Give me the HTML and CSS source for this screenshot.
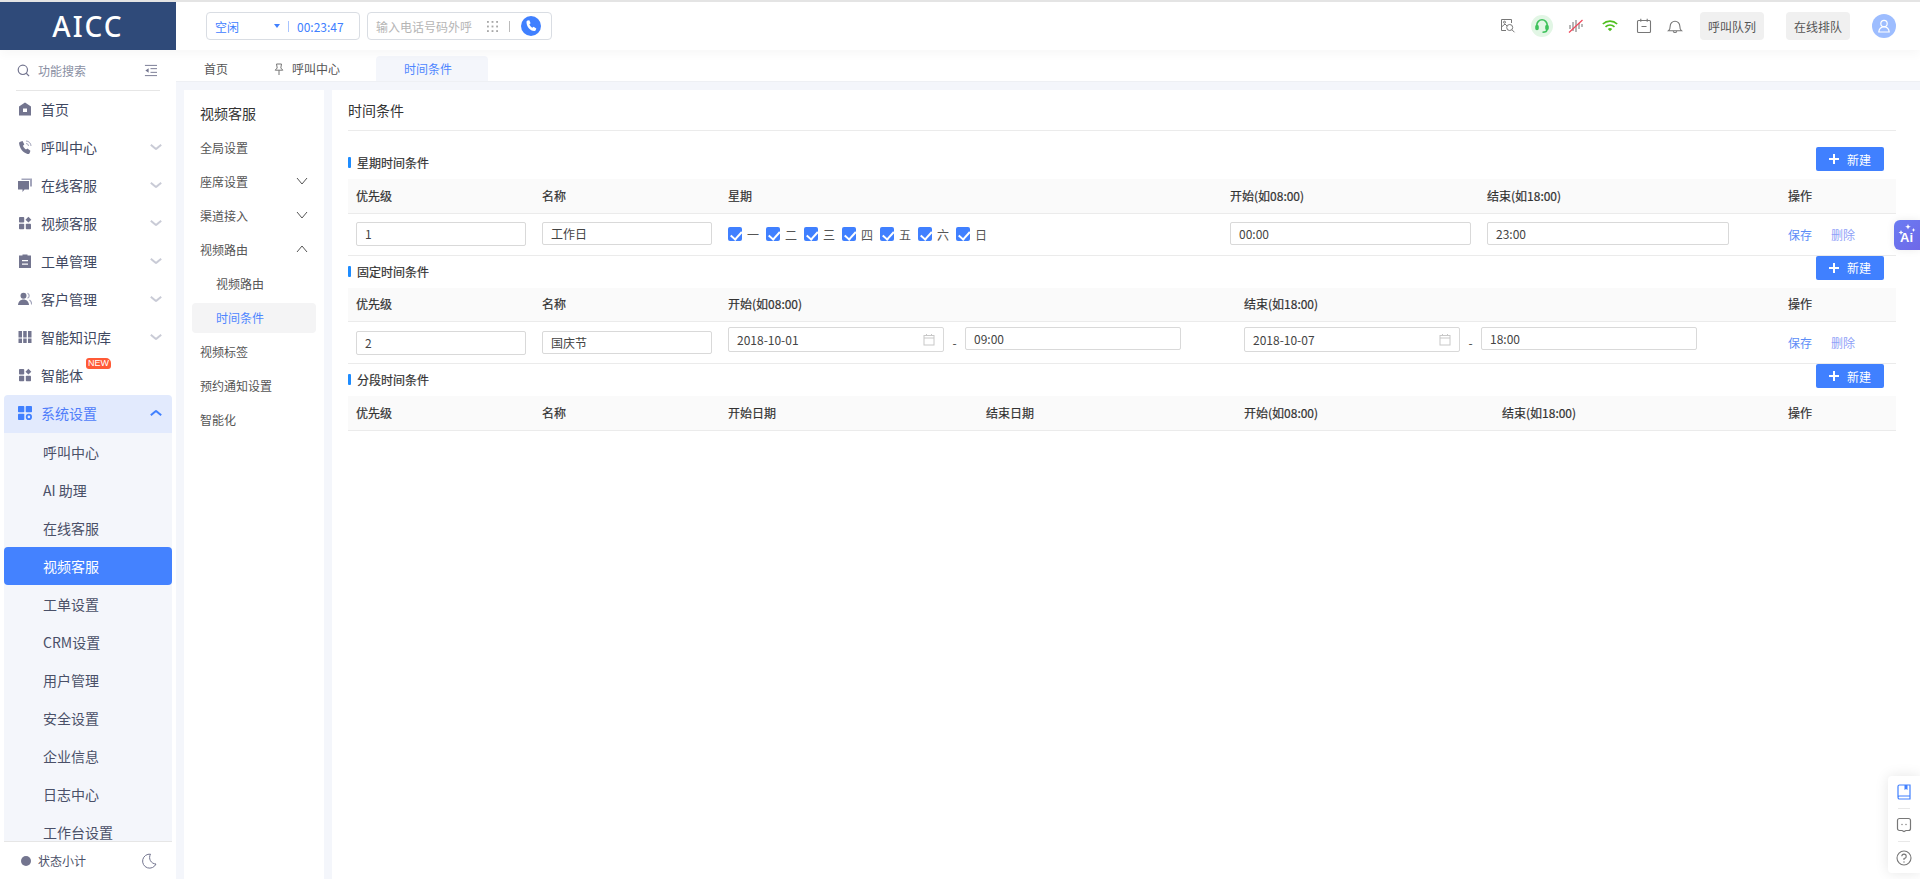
FILE: index.html
```html
<!DOCTYPE html>
<html lang="zh-CN">
<head>
<meta charset="utf-8">
<title>AICC</title>
<link rel="stylesheet" href="styles.css">
</head>
<body>
<header class="topbar">
  <div class="logo">AICC</div>
  <div class="status-box">
    <span class="status-name">空闲</span>
    <span class="caret"></span>
    <span class="vsep vsep-blue"></span>
    <span class="status-time">00:23:47</span>
  </div>
  <div class="dial-box">
    <span class="dial-hint">输入电话号码外呼</span>
    <svg class="dial-pad" viewBox="0 0 12 12"><g fill="#a8a8a8"><rect x="0" y="0" width="2" height="2"/><rect x="5" y="0" width="2" height="2"/><rect x="10" y="0" width="2" height="2"/><rect x="0" y="5" width="2" height="2"/><rect x="5" y="5" width="2" height="2"/><rect x="10" y="5" width="2" height="2"/><rect x="0" y="10" width="2" height="2"/><rect x="5" y="10" width="2" height="2"/><rect x="10" y="10" width="2" height="2"/></g></svg>
    <span class="vsep"></span>
    <span class="dial-btn"><svg viewBox="0 0 20 20"><path fill="#fff" d="M6.600 4.600 8.300 4.200l1.300 3-1.200 1.100c.5 1.400 1.500 2.600 2.900 3.400l1.300-1 2.700 1.700-.5 1.700c-.2.600-.9 1-1.600.9C8.900 14.500 5.700 11 5.500 6.200c0-.7.500-1.400 1.100-1.600Z"/></svg></span>
  </div>
  <div class="tools">
    <svg class="tool tool-first" viewBox="0 0 16 16" fill="none" stroke="#777" stroke-width="1"><path d="M6 12.500H1.500v-11h10V5"/><path d="M1.500 9 5 6l2 2"/><circle cx="4.500" cy="4.200" r="1"/><circle cx="9.700" cy="9.500" r="3"/><path d="m12 11.800 2.500 2.500"/></svg>
    <span class="tool-round"><svg viewBox="0 0 16 16" fill="none" stroke="#3fc25c" stroke-width="1.600"><path d="M2.800 9V7a5.200 5.200 0 0 1 10.400 0v2"/><rect x="2" y="7.500" width="2" height="4" rx="1" fill="#3fc25c"/><rect x="12" y="7.500" width="2" height="4" rx="1" fill="#3fc25c"/><path d="M13 11.500c0 2-2 2.700-4.500 2.700"/></svg></span>
    <svg class="tool" viewBox="0 0 16 16" fill="none" stroke="#888" stroke-width="1.200"><path d="M2 7v4M5 4v9M8 2v12M11 5v6M14 6v3"/><path d="M1 14.500 14.500 2" stroke="#f0475a"/></svg>
    <svg class="tool" viewBox="0 0 16 16" fill="none" stroke="#4fbf1f" stroke-width="1.600"><path d="M.8 6a10.500 10.500 0 0 1 14.400 0"/><path d="M3.500 8.800a6.500 6.500 0 0 1 9 0"/><path d="M8 13.200 5.800 11a3.200 3.200 0 0 1 4.400 0Z" fill="#4fbf1f" stroke="none"/></svg>
    <svg class="tool tool-cal" viewBox="0 0 16 16" fill="none" stroke="#777" stroke-width="1.100"><rect x="1.500" y="2.500" width="13" height="12" rx="1"/><path d="M4.800 .8v3M11.200 .8v3M5.500 8.500h5"/></svg>
    <svg class="tool tool-bell" viewBox="0 0 16 16" fill="none" stroke="#777" stroke-width="1.100"><path d="M1.500 12.800h13c-1.300-1-1.700-2-1.700-4.800a4.800 4.800 0 0 0-9.600 0c0 2.800-.4 3.800-1.700 4.800Z"/><path d="M6.200 13.200a1.900 1.900 0 0 0 3.600 0"/></svg>
  </div>
  <button class="queue-btn">呼叫队列</button>
  <button class="queue-btn queue-btn-second">在线排队</button>
  <span class="avatar"><svg viewBox="0 0 24 24" fill="none" stroke="#fff" stroke-width="1.200"><circle cx="12" cy="9.500" r="3.200"/><path d="M6.800 18c.3-3.300 2.300-5.200 5.200-5.200s4.900 1.900 5.200 5.200Z"/></svg></span>
</header>

<div class="workspace">
  <aside class="sidebar">
    <div class="side-search">
      <svg class="side-search-icon" viewBox="0 0 14 14" fill="none" stroke="#73758f" stroke-width="1.300"><circle cx="6.300" cy="6.300" r="5"/><path d="m10 10 3 3"/></svg>
      <span class="side-search-text">功能搜索</span>
      <svg class="side-collapse" viewBox="0 0 14 14" fill="none" stroke="#73758f" stroke-width="1"><path d="M1 1.500h13M7 5h7M7 9h7M1 12.500h13"/><path d="M5 4.500v5L1.500 7Z" fill="#73758f" stroke="none"/></svg>
    </div>
    <nav class="menu">
      <a class="menu-item"><svg class="mi" viewBox="0 0 14 14"><path fill="#73758f" fill-rule="evenodd" d="M7 .5 13 4.500V13.500H1V4.500ZM5 6.500V10H9V6.500Z"/></svg><span class="mt">首页</span></a>
      <a class="menu-item"><svg class="mi" viewBox="0 0 14 14"><path fill="#73758f" d="M2.300 1.800 4.600 1l1.700 3.600-1.300 1.200c.5 1.600 1.500 2.800 3 3.700l1.400-1 3 2.300-.7 2.300c-.3.800-1.100 1.200-1.900 1C5.300 12.800 1.700 8.700 1.100 3.500c-.1-.8.400-1.400 1.200-1.700Z"/><path fill="none" stroke="#a3a5bb" stroke-width="1" d="M8 1a5 5 0 0 1 5 5M8 3.500a2.500 2.500 0 0 1 2.500 2.500"/></svg><span class="mt">呼叫中心</span><span class="chev"></span></a>
      <a class="menu-item"><svg class="mi" viewBox="0 0 14 14"><path fill="#73758f" d="M0 3h11v8.500H6.500L4.500 14V11.500H0Z"/><path fill="#a3a5bb" d="M3.500 .5H14v8h-2V2H3.500Z"/></svg><span class="mt">在线客服</span><span class="chev"></span></a>
      <a class="menu-item"><svg class="mi" viewBox="0 0 14 14"><g fill="#73758f"><rect x="1" y="1" width="5.200" height="5.500" rx=".8"/><rect x="1" y="7.800" width="5.200" height="5.500" rx=".8"/><rect x="7.800" y="7.800" width="5.200" height="5.500" rx=".8"/><path d="m10.400.8 2.900 2.900-2.900 2.900-2.900-2.900Z"/></g></svg><span class="mt">视频客服</span><span class="chev"></span></a>
      <a class="menu-item"><svg class="mi" viewBox="0 0 14 14"><path fill="#73758f" fill-rule="evenodd" d="M4.500 1.500V.5h5v1H13v12.500H1V1.500ZM4 6v1.200h6V6ZM4 9.500v1.200h6V9.500Z"/></svg><span class="mt">工单管理</span><span class="chev"></span></a>
      <a class="menu-item"><svg class="mi" viewBox="0 0 14 14"><circle cx="5.500" cy="3.700" r="3" fill="#73758f"/><path fill="#73758f" d="M0 13c.2-3.300 2.500-5.500 5.500-5.500S10.800 9.700 11 13Z"/><path fill="none" stroke="#a3a5bb" stroke-width="1.200" d="M9.500 1.200a2.700 2.700 0 0 1 0 5M11.500 8c1.300.8 2.100 2.500 2.200 4.500"/></svg><span class="mt">客户管理</span><span class="chev"></span></a>
      <a class="menu-item"><svg class="mi" viewBox="0 0 14 14"><g fill="#73758f"><rect x="0.500" y="1" width="3.500" height="12"/><rect x="5.200" y="1" width="3.500" height="12"/><rect x="10" y="1" width="3.500" height="12"/></g><path stroke="#fff" stroke-width="1" d="M0 8h14"/></svg><span class="mt">智能知识库</span><span class="chev"></span></a>
      <a class="menu-item"><svg class="mi" viewBox="0 0 14 14"><g fill="#73758f"><rect x="1" y="1" width="5.200" height="5.500" rx=".8"/><rect x="1" y="7.800" width="5.200" height="5.500" rx=".8"/><rect x="7.800" y="7.800" width="5.200" height="5.500" rx=".8"/><path d="m10.400.8 2.900 2.900-2.900 2.900-2.900-2.900Z"/></g></svg><span class="mt">智能体</span><span class="badge-new">NEW</span></a>
      <a class="menu-item menu-item-open"><svg class="mi" viewBox="0 0 14 14"><g fill="#4080ff"><rect x="0" y="0" width="6.300" height="6.300" rx=".8"/><rect x="7.700" y="0" width="6.300" height="6.300" rx=".8"/><rect x="0" y="7.700" width="6.300" height="6.300" rx=".8"/></g><circle cx="10.900" cy="10.900" r="2.200" fill="none" stroke="#4080ff" stroke-width="1.800"/></svg><span class="mt">系统设置</span><span class="chev chev-up"></span></a>
      <div class="submenu">
        <a class="sub-item">呼叫中心</a>
        <a class="sub-item">AI 助理</a>
        <a class="sub-item">在线客服</a>
        <a class="sub-item sub-item-active">视频客服</a>
        <a class="sub-item">工单设置</a>
        <a class="sub-item">CRM设置</a>
        <a class="sub-item">用户管理</a>
        <a class="sub-item">安全设置</a>
        <a class="sub-item">企业信息</a>
        <a class="sub-item">日志中心</a>
        <a class="sub-item">工作台设置</a>
      </div>
    </nav>
    <div class="side-foot">
      <span class="foot-dot"></span>
      <span class="foot-text">状态小计</span>
      <svg class="foot-moon" viewBox="0 0 16 16" fill="none" stroke="#73758f" stroke-width="1"><path d="M9.500 1.200A7 7 0 1 0 15 11 6.500 6.500 0 0 1 9.500 1.200Z"/></svg>
    </div>
  </aside>

  <div class="content">
    <div class="tabs">
      <a class="tab tab-home">首页</a>
      <a class="tab tab-pin"><svg class="pin" viewBox="0 0 12 12" fill="none" stroke="#777" stroke-width="1"><path d="M3.500 1h5L7.800 5l2 2.200H2.200L4.200 5ZM6 7.200V12"/></svg>呼叫中心</a>
      <a class="tab tab-active">时间条件</a>
    </div>
    <div class="panels">
      <div class="subnav">
        <div class="subnav-title">视频客服</div>
        <a class="sn-item">全局设置</a>
        <a class="sn-item">座席设置<svg class="sn-chev" viewBox="0 0 12 8" fill="none" stroke="#555" stroke-width="1"><path d="m1 1 5 6 5-6"/></svg></a>
        <a class="sn-item">渠道接入<svg class="sn-chev" viewBox="0 0 12 8" fill="none" stroke="#555" stroke-width="1"><path d="m1 1 5 6 5-6"/></svg></a>
        <a class="sn-item">视频路由<svg class="sn-chev" viewBox="0 0 12 8" fill="none" stroke="#555" stroke-width="1"><path d="m1 7 5-6 5 6"/></svg></a>
        <a class="sn-item sn-sub">视频路由</a>
        <a class="sn-item sn-sub sn-active">时间条件</a>
        <a class="sn-item">视频标签</a>
        <a class="sn-item">预约通知设置</a>
        <a class="sn-item">智能化</a>
      </div>
      <main class="page">
        <h1 class="page-title">时间条件</h1>

        <section class="block block-first">
          <div class="block-head">
            <h2 class="block-title">星期时间条件</h2>
            <button class="add-btn"><span class="plus"></span>新建</button>
          </div>
          <table class="grid">
            <colgroup><col class="c186"><col class="c186"><col class="c502"><col class="c257"><col class="c301"><col></colgroup>
            <thead><tr><th>优先级</th><th>名称</th><th>星期</th><th>开始(如08:00)</th><th>结束(如18:00)</th><th>操作</th></tr></thead>
            <tbody><tr>
              <td><div class="field field-full field-tall">1</div></td>
              <td><div class="field field-full">工作日</div></td>
              <td><div class="weekdays">
                <label class="wd"><span class="cb"></span>一</label>
                <label class="wd"><span class="cb"></span>二</label>
                <label class="wd"><span class="cb"></span>三</label>
                <label class="wd"><span class="cb"></span>四</label>
                <label class="wd"><span class="cb"></span>五</label>
                <label class="wd"><span class="cb"></span>六</label>
                <label class="wd"><span class="cb"></span>日</label>
              </div></td>
              <td><div class="field w241">00:00</div></td>
              <td><div class="field w242">23:00</div></td>
              <td class="ops"><a class="op-save">保存</a><a class="op-del">删除</a></td>
            </tr></tbody>
          </table>
        </section>

        <section class="block">
          <div class="block-head">
            <h2 class="block-title">固定时间条件</h2>
            <button class="add-btn"><span class="plus"></span>新建</button>
          </div>
          <table class="grid">
            <colgroup><col class="c186"><col class="c186"><col class="c516"><col class="c544"><col></colgroup>
            <thead><tr><th>优先级</th><th>名称</th><th>开始(如08:00)</th><th>结束(如18:00)</th><th>操作</th></tr></thead>
            <tbody><tr>
              <td><div class="field field-full field-tall">2</div></td>
              <td><div class="field field-full">国庆节</div></td>
              <td><div class="range">
                <div class="field field-date">2018-10-01<svg class="cal" viewBox="0 0 12 12" fill="none" stroke="#c8c8c8" stroke-width="1"><rect x="1" y="2" width="10" height="9.500"/><path d="M1 4.500h10M3.500 .5v2M8.500 .5v2"/></svg></div>
                <span class="dash">-</span>
                <div class="field field-time">09:00</div>
              </div></td>
              <td><div class="range">
                <div class="field field-date">2018-10-07<svg class="cal" viewBox="0 0 12 12" fill="none" stroke="#c8c8c8" stroke-width="1"><rect x="1" y="2" width="10" height="9.500"/><path d="M1 4.500h10M3.500 .5v2M8.500 .5v2"/></svg></div>
                <span class="dash">-</span>
                <div class="field field-time">18:00</div>
              </div></td>
              <td class="ops"><a class="op-save">保存</a><a class="op-del">删除</a></td>
            </tr></tbody>
          </table>
        </section>

        <section class="block">
          <div class="block-head">
            <h2 class="block-title">分段时间条件</h2>
            <button class="add-btn"><span class="plus"></span>新建</button>
          </div>
          <table class="grid">
            <colgroup><col class="c186"><col class="c186"><col class="c258"><col class="c258"><col class="c258"><col class="c286"><col></colgroup>
            <thead><tr><th>优先级</th><th>名称</th><th>开始日期</th><th>结束日期</th><th>开始(如08:00)</th><th>结束(如18:00)</th><th>操作</th></tr></thead>
          </table>
        </section>
      </main>
    </div>
  </div>
</div>

<div class="ai-tab"><svg class="ai-stars" viewBox="0 0 26 30"><g fill="#fff"><path d="m14 4 .8 2 2 .8-2 .8-.8 2-.8-2-2-.8 2-.8Z"/><path d="m7 10 .7 1.800 1.800.7-1.800.7-.7 1.800-.7-1.800-1.800-.7 1.800-.7Z"/><path d="m19.500 8 .6 1.400 1.400.6-1.400.6-.6 1.400-.6-1.400-1.400-.6 1.400-.6Z"/></g></svg><span class="ai-word">Ai</span></div>
<div class="float-tools">
  <svg class="ft" viewBox="0 0 16 16" fill="none" stroke="#4080ff" stroke-width="1.200"><path d="M2 13V2.500C2 1.700 2.700 1 3.500 1H14v14H3.500C2.700 15 2 14.300 2 13.500s.7-1.500 1.500-1.500H14"/><path d="M8.500 1h3v5l-1.500-1-1.500 1Z" fill="#4080ff" stroke="none"/></svg>
  <span class="ft-line"></span>
  <svg class="ft" viewBox="0 0 16 16" fill="none" stroke="#777" stroke-width="1.200"><path d="M3.500 1.500h9c1.200 0 2 .8 2 2v8c0 1.200-.8 2-2 2H10l-2 1-2-1H3.500c-1.200 0-2-.8-2-2v-8c0-1.200.8-2 2-2Z"/><circle cx="6" cy="7.500" r=".7" fill="#777" stroke="none"/><circle cx="10" cy="7.500" r=".7" fill="#777" stroke="none"/></svg>
  <span class="ft-line"></span>
  <svg class="ft" viewBox="0 0 16 16" fill="none" stroke="#777" stroke-width="1.100"><circle cx="8" cy="8" r="7"/><path d="M5.800 6.200A2.200 2.200 0 1 1 8 8.500v1.500"/><circle cx="8" cy="12" r=".7" fill="#777" stroke="none"/></svg>
</div>
</body>
</html>
```
FILE: styles.css
```css
* { box-sizing: border-box; }
html, body { margin: 0; height: 100%; overflow: hidden; }
body {
  display: flex;
  flex-direction: column;
  font-family: "Noto Sans CJK SC", "Noto Sans", sans-serif;
  font-size: 12px;
  color: #333;
  background: #fff;
}
a { display: block; color: inherit; text-decoration: none; }
h1, h2 { margin: 0; font-weight: 400; }

/* top bar */
.topbar {
  flex: none;
  height: 50px;
  border-top: 2px solid #e4e4e4;
  display: flex;
  align-items: center;
  background: #fff;
  position: relative;
  z-index: 2;
  box-shadow: 0 4px 10px rgba(0, 0, 0, .035);
}
.logo {
  width: 176px;
  height: 48px;
  flex: none;
  background: #2f4a79;
  color: #fff;
  font-family: "Noto Sans", sans-serif;
  font-size: 28px;
  font-weight: 500;
  letter-spacing: 2px;
  line-height: 48px;
  text-align: center;
}
.status-box, .dial-box {
  height: 28px;
  display: flex;
  align-items: center;
  border: 1px solid #d9dde3;
  border-radius: 4px;
}
.status-box { width: 154px; margin-left: 30px; padding-left: 8px; color: #4080ff; }
.status-name { width: 51px; }
.caret { width: 0; height: 0; border: 3.500px solid transparent; border-top: 4px solid #4080ff; border-bottom: 0; margin-left: 8px; }
.vsep { width: 1px; height: 11px; background: #bbb; }
.vsep-blue { background: #a8c4ff; margin-left: 8px; }
.status-time { margin-left: 8px; }
.dial-box { width: 185px; margin-left: 7px; padding-left: 8px; }
.dial-hint { color: #b5b5b5; width: 96px; flex: none; }
.dial-pad { width: 11px; height: 11px; margin-left: 15px; }
.dial-box .vsep { margin-left: 11px; }
.dial-btn { width: 20px; height: 20px; border-radius: 50%; background: #4080ff; margin-left: 11px; display: flex; }
.dial-btn svg { width: 20px; height: 20px; }
.tools { margin-left: auto; display: flex; align-items: center; }
.tool { width: 16px; height: 16px; margin-right: 18px; }
.tool-first { margin-right: 15px; }
.tool-cal { margin-right: 15px; }
.tool-round { width: 22px; height: 22px; border-radius: 50%; background: #e2f6e5; margin-right: 15px; display: flex; align-items: center; justify-content: center; }
.tool-round svg { width: 16px; height: 16px; }
.tool-bell { margin-right: 17px; }
.queue-btn {
  width: 64px;
  height: 28px;
  border: 0;
  padding: 0;
  border-radius: 4px;
  background: #f0f0f0;
  color: #555;
  font: inherit;
}
.queue-btn-second { margin-left: 22px; }
.avatar { width: 24px; height: 24px; border-radius: 50%; background: #9dbdff; margin: 0 24px 0 22px; display: flex; }
.avatar svg { width: 24px; height: 24px; }

/* layout */
.workspace { flex: 1; min-height: 0; display: flex; }

/* sidebar */
.sidebar { width: 176px; flex: none; display: flex; flex-direction: column; background: #fff; }
.side-search { height: 41px; flex: none; margin: 0 16px; border-bottom: 1px solid #e6e6e6; display: flex; align-items: center; color: #8a8fa3; }
.side-search-icon { width: 13px; height: 13px; margin-left: 1px; }
.side-search-text { margin-left: 8px; }
.side-collapse { width: 13px; height: 13px; margin-left: auto; margin-right: 3px; }
.menu { flex: 1; min-height: 0; overflow: hidden; padding: 0 4px; }
.menu-item {
  height: 38px;
  display: flex;
  align-items: center;
  padding: 0 0 2px 14px;
  font-size: 14px;
  color: #3f4861;
  position: relative;
}
.mi { width: 14px; height: 14px; flex: none; margin-right: 9px; }
.chev { position: absolute; left: 147px; top: 15px; width: 10px; height: 6px; }
.chev::before, .chev::after { content: ""; position: absolute; top: 2px; width: 7px; height: 2px; background: #c9cbd6; }
.chev::before { left: -1px; transform: rotate(40deg); }
.chev::after { left: 4px; transform: rotate(-40deg); }
.chev-up::before { background: #4080ff; transform: rotate(-40deg); }
.chev-up::after { background: #4080ff; transform: rotate(40deg); }
.badge-new {
  position: absolute;
  left: 82px;
  top: 1px;
  width: 25px;
  height: 11px;
  background: #ff5a36;
  border-radius: 3px 5px 3px 3px;
  color: #fff;
  font-family: "Liberation Sans", sans-serif;
  font-size: 9px;
  line-height: 11px;
  text-align: center;
}
.menu-item-open { background: #e2eafd; border-radius: 4px 4px 0 0; color: #4f7dfa; }
.submenu { background: #f4f6fb; }
.sub-item { height: 38px; line-height: 38px; padding-left: 39px; font-size: 14px; color: #4a5068; }
.sub-item-active { background: #4482ff; color: #fff; border-radius: 4px; }
.side-foot { height: 38px; flex: none; margin: 0 4px; border-top: 1px solid #e6e6e6; display: flex; align-items: center; position: relative; color: #4a5068; }
.foot-dot { width: 10px; height: 10px; border-radius: 50%; background: #73758f; margin-left: 17px; }
.foot-text { margin-left: 7px; }
.foot-moon { width: 16px; height: 16px; margin-left: auto; margin-right: 15px; }

/* content */
.content { flex: 1; min-width: 0; display: flex; flex-direction: column; background: #f4f6fb; }
.tabs { height: 32px; flex: none; background: #fff; border-bottom: 1px solid #eef0f4; display: flex; align-items: flex-end; color: #555; }
.tab { height: 25px; line-height: 25px; }
.tab-home { margin-left: 28px; width: 69px; }
.tab-pin { width: 103px; display: flex; align-items: center; }
.pin { width: 12px; height: 12px; margin-right: 7px; }
.tab-active { width: 112px; padding-left: 28px; background: #f4f6fb; border-radius: 4px 4px 0 0; color: #4f86ff; }
.panels { flex: 1; min-height: 0; display: flex; padding: 8px 0 0 8px; gap: 8px; }
.subnav { width: 140px; flex: none; background: #fff; padding: 7px 8px; }
.subnav-title { height: 34px; line-height: 32px; font-size: 14px; padding-left: 8px; color: #333; }
.sn-item { height: 34px; line-height: 34px; padding-left: 8px; color: #555; display: flex; align-items: center; position: relative; }
.sn-chev { position: absolute; right: 8px; top: 12px; width: 12px; height: 8px; }
.sn-sub { padding-left: 24px; }
.sn-active { height: 30px; line-height: 30px; margin: 2px 0; background: #f4f4f5; border-radius: 4px; color: #4f86ff; }

/* page */
.page { flex: 1; min-width: 0; background: #fff; padding: 0 24px 0 16px; }
.page-title { height: 41px; line-height: 40px; font-size: 14px; color: #333; border-bottom: 1px solid #ebebeb; }
.block-first { margin-top: 16px; }
.block-head { height: 24px; margin-bottom: 8px; display: flex; align-items: center; justify-content: space-between; padding-right: 12px; }
.block-title { margin-top: 7px; display: flex; align-items: center; gap: 6px; font-size: 12px; color: #333; -webkit-text-stroke: .2px #333; }
.block-title::before { content: ""; width: 3px; height: 11px; background: #1e8cff; border-radius: 1px; }
.add-btn {
  width: 68px;
  height: 24px;
  padding: 0;
  border: 0;
  border-radius: 2px;
  background: #4080ff;
  color: #fff;
  font: inherit;
  display: flex;
  align-items: center;
  justify-content: center;
  gap: 8px;
}
.plus { width: 10px; height: 10px; background: linear-gradient(#fff, #fff) center / 10px 2px no-repeat, linear-gradient(#fff, #fff) center / 2px 10px no-repeat; }

.grid { width: 100%; table-layout: fixed; border-collapse: collapse; }
.c186 { width: 186px; }
.c502 { width: 502px; }
.c257 { width: 257px; }
.c301 { width: 301px; }
.c516 { width: 516px; }
.c544 { width: 544px; }
.c258 { width: 258px; }
.c286 { width: 286px; }
th { height: 34px; padding: 0 0 1px 8px; background: #fafafa; border-bottom: 1px solid #ebebeb; text-align: left; font-weight: 400; color: #333; -webkit-text-stroke: .2px #333; }
td { height: 42px; padding: 0 0 0 8px; border-bottom: 1px solid #ebebeb; vertical-align: middle; }
.field {
  height: 23px;
  border: 1px solid #d9d9d9;
  border-radius: 2px;
  line-height: 21px;
  padding-left: 8px;
  color: #444;
  background: #fff;
  margin-bottom: 1px;
}
.field-full { width: 170px; }
.field-tall { height: 24px; margin-bottom: 0; }
.w241 { width: 241px; }
.w242 { width: 242px; }
.weekdays { display: flex; }
.wd { width: 38px; display: flex; align-items: center; gap: 5px; color: #555; flex: none; }
.cb {
  width: 14px;
  height: 14px;
  border-radius: 2px;
  flex: none;
  background: #4080ff;
  position: relative;
}
.cb::after {
  content: "";
  position: absolute;
  left: 4.500px;
  top: 1.500px;
  width: 5px;
  height: 8.500px;
  border: solid #fff;
  border-width: 0 2px 2px 0;
  transform: rotate(42deg);
}
.range { display: flex; align-items: flex-start; }
.field-date { width: 216px; height: 25px; margin-bottom: 0; line-height: 23px; position: relative; }
.cal { position: absolute; right: 8px; top: 5px; width: 12px; height: 13px; }
.dash { width: 21px; text-align: center; line-height: 32px; color: #444; flex: none; }
.field-time { width: 216px; }
.ops { white-space: nowrap; }
.op-save, .op-del { display: inline-block; }
.op-save { color: #5c8df7; }
.op-del { color: #8f9ff8; margin-left: 19px; }

/* floating */
.ai-tab {
  position: absolute;
  right: 0;
  top: 220px;
  width: 26px;
  height: 30px;
  border-radius: 6px 0 0 6px;
  background: linear-gradient(135deg, #6a7cf2, #6f68e8);
  color: #fff;
  font-family: "Liberation Sans", sans-serif;
  font-weight: 700;
  font-size: 13px;
  box-shadow: 0 0 8px rgba(0, 0, 0, .08);
}
.ai-word { position: absolute; left: 6px; top: 10px; line-height: 15px; }
.ai-stars { position: absolute; left: 0; top: 0; width: 26px; height: 30px; }
.float-tools {
  position: absolute;
  right: 0;
  top: 776px;
  width: 32px;
  height: 97px;
  background: #fff;
  border-radius: 4px 0 0 4px;
  box-shadow: 0 0 14px rgba(0, 0, 0, .1);
  display: flex;
  flex-direction: column;
  align-items: center;
}
.ft { width: 16px; height: 16px; flex: none; margin: 8px 0; }
.ft-line { width: 12px; height: 1px; background: #e8e8e8; flex: none; }
```
